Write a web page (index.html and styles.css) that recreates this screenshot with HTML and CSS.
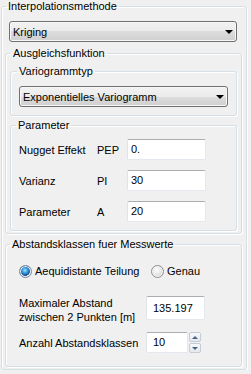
FILE: index.html
```html
<!DOCTYPE html>
<html lang="de">
<head>
    <meta charset="UTF-8">
    <title>Interpolation</title>
    <link rel="stylesheet" href="styles.css">
</head>
<body>

<fieldset class="grp methode">
    <legend>Interpolationsmethode</legend>
    <div class="combo combo-methode">
        <span>Kriging</span>
        <span class="pfeil"></span>
    </div>

    <fieldset class="grp ausgleich">
        <legend>Ausgleichsfunktion</legend>

        <fieldset class="grp typ">
            <legend>Variogrammtyp</legend>
            <div class="combo">
                <span>Exponentielles Variogramm</span>
                <span class="pfeil"></span>
            </div>
        </fieldset>

        <fieldset class="grp parameter">
            <legend>Parameter</legend>
            <div class="param-zeile">
                <label>Nugget Effekt</label>
                <span>PEP</span>
                <div class="feld">0.</div>
            </div>
            <div class="param-zeile">
                <label>Varianz</label>
                <span>PI</span>
                <div class="feld">30</div>
            </div>
            <div class="param-zeile">
                <label>Parameter</label>
                <span>A</span>
                <div class="feld">20</div>
            </div>
        </fieldset>
    </fieldset>

    <fieldset class="grp abstand">
        <legend>Abstandsklassen fuer Messwerte</legend>
        <div class="radio-zeile">
            <div class="option erste">
                <span class="radio an"></span>
                <span>Aequidistante Teilung</span>
            </div>
            <div class="option">
                <span class="radio"></span>
                <span>Genau</span>
            </div>
        </div>
        <div class="abstand-zeile">
            <label>Maximaler Abstand<br>zwischen 2 Punkten [m]</label>
            <div class="feld feld-max">135.197</div>
        </div>
        <div class="abstand-zeile anzahl">
            <label>Anzahl Abstandsklassen</label>
            <div class="feld feld-anzahl">10</div>
            <div class="spin">
                <span class="spin-knopf"><span class="hoch"></span></span>
                <span class="spin-knopf"><span class="runter"></span></span>
            </div>
        </div>
    </fieldset>
</fieldset>

</body>
</html>
```

FILE: styles.css
```css
body {
    margin: 0;
    background-color: #f0f0f0;
    font-family: "Liberation Sans", Arial, sans-serif;
    font-size: 11px;
    color: #000;
}

/* Gruppenrahmen */
.grp {
    border: 1px solid #d5dfe5;
    border-radius: 3px;
    box-shadow: inset 1px 1px 0 #fff, 1px 1px 0 #fff;
    margin: 0;
    min-width: 0;
}

.grp > legend {
    padding: 0 2px;
    line-height: 13px;
}

.methode {
    margin: 0 4px 0 1px;
    padding: 8px 4px 2px 3px;
}

.methode > legend {
    margin-left: 1px;
}

.ausgleich {
    margin-top: 5px;
    padding: 5px 4px 2px 4px;
}

.ausgleich > legend {
    margin-left: 1px;
}

.typ {
    padding: 8px 8px 8px 8px;
}

.typ > legend {
    margin-left: -2px;
}

.parameter {
    margin-top: 3px;
    padding: 7px 8px 8px 8px;
}

.parameter > legend {
    margin-left: -3px;
}

.abstand {
    margin-top: 4px;
    padding: 12px 4px 13px 13px;
}

.abstand > legend {
    margin-left: -9px;
}

/* Kombinationsfeld */
.combo {
    display: flex;
    justify-content: space-between;
    align-items: center;
    height: 19px;
    padding: 0 3px 0 3px;
    border: 1px solid #707070;
    border-radius: 3px;
    background: linear-gradient(#f2f2f2 0%, #ebebeb 50%, #dddddd 50%, #cfcfcf 100%);
    box-shadow: inset 0 0 0 1px #f8f8f8;
}

.combo-methode {
    margin: 0 5px 0 4px;
}

.pfeil {
    width: 0;
    height: 0;
    margin-right: 0;
    border-left: 4px solid transparent;
    border-right: 4px solid transparent;
    border-top: 4px solid #000;
}

/* Eingabefelder */
.feld {
    box-sizing: border-box;
    height: 21px;
    line-height: 19px;
    padding: 0 3px;
    background-color: #fff;
    border: 1px solid #e3e9ef;
    border-top-color: #abadb3;
    border-left-color: #e2e3ea;
    border-radius: 2px;
}

.param-zeile {
    display: grid;
    grid-template-columns: 78px 30px 79px;
    align-items: center;
    margin-bottom: 10px;
}

.param-zeile:last-child {
    margin-bottom: 0;
}

/* Optionsfelder */
.radio-zeile {
    display: flex;
    align-items: center;
    height: 16px;
}

.option {
    display: flex;
    align-items: center;
    gap: 3px;
}

.option.erste {
    width: 132px;
}

.radio {
    box-sizing: border-box;
    width: 13px;
    height: 13px;
    border-radius: 50%;
    border: 1px solid #8f8f8f;
    background: radial-gradient(circle at 40% 35%, #ffffff 0%, #e6e6e6 50%, #cfcfcf 100%);
    box-shadow: inset 0 0 0 1px #f4f4f4;
}

.radio.an {
    border-color: #6f86a3;
    background:
        radial-gradient(circle at 45% 40%, #9fe3ff 0%, #2d8ed8 35%, #14407a 60%, transparent 62%),
        radial-gradient(circle, #ffffff 0%, #dfe6ee 100%);
}

/* Abstandsklassen */
.abstand-zeile {
    display: flex;
    align-items: flex-start;
    margin-top: 17px;
}

.abstand-zeile label {
    width: 127px;
    line-height: 14px;
}

.abstand-zeile.anzahl {
    margin-top: 8px;
    align-items: center;
}

.feld-max {
    width: 59px;
    height: 24px;
    line-height: 22px;
    padding-left: 6px;
}

.feld-anzahl {
    width: 42px;
    padding-left: 6px;
}

.spin {
    display: flex;
    flex-direction: column;
    gap: 1px;
    margin-left: 1px;
}

.spin-knopf {
    box-sizing: border-box;
    display: flex;
    align-items: center;
    justify-content: center;
    width: 12px;
    height: 10px;
    border: 1px solid #c4ccd6;
    border-radius: 2px;
    background: linear-gradient(#f7f9fb, #e3e8ee);
}

.hoch {
    width: 0;
    height: 0;
    border-left: 3px solid transparent;
    border-right: 3px solid transparent;
    border-bottom: 3px solid #4d6185;
}

.runter {
    width: 0;
    height: 0;
    border-left: 3px solid transparent;
    border-right: 3px solid transparent;
    border-top: 3px solid #4d6185;
}
```
